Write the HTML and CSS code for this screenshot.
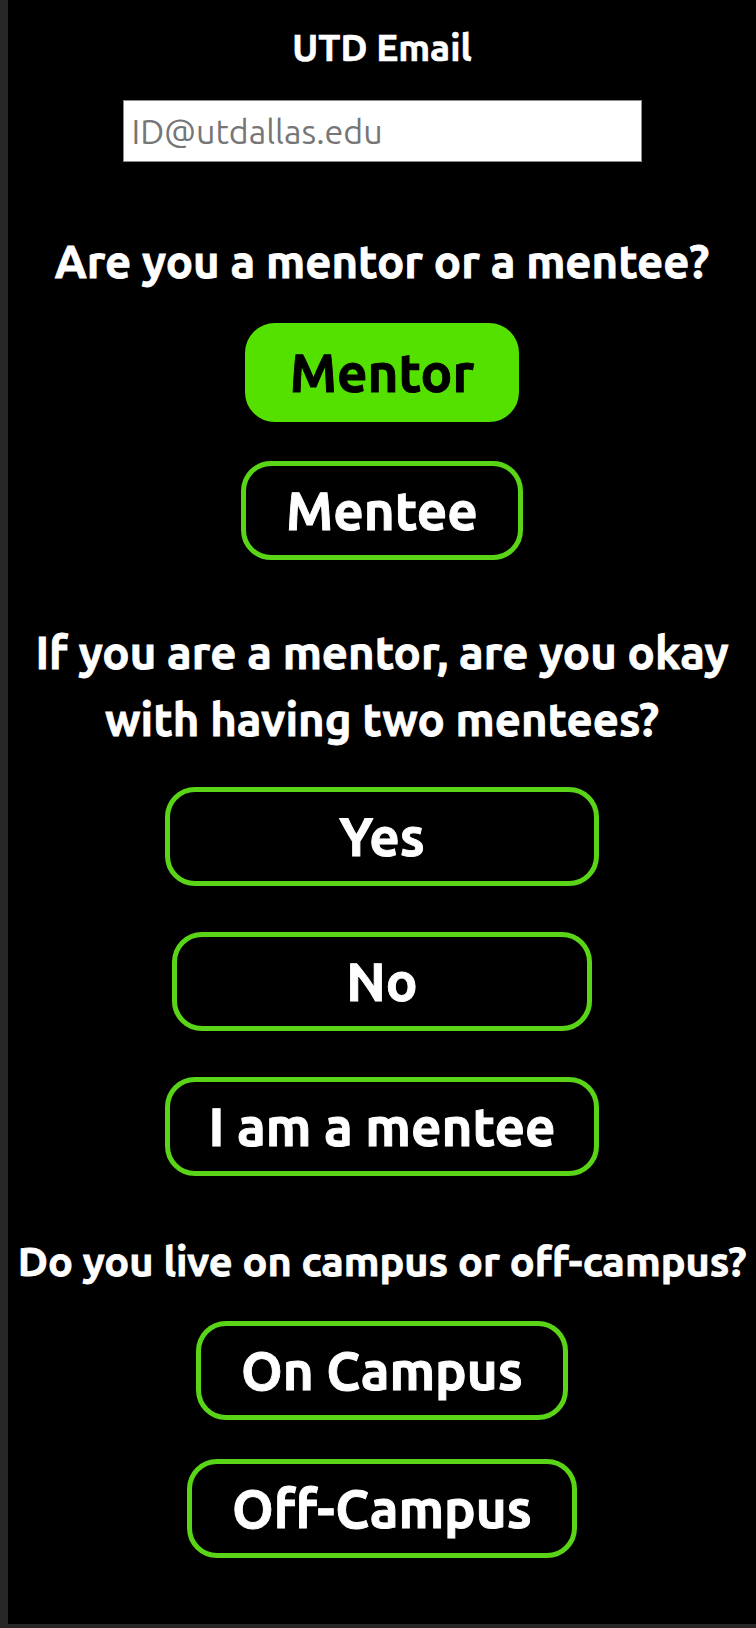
FILE: index.html
```html
<!DOCTYPE html>
<html lang="en">
<head>
<meta charset="utf-8">
<title>Mentorship Sign Up</title>
<link rel="stylesheet" href="styles.css">
</head>
<body>
<main class="page">
  <section class="field">
    <label class="field-label" for="email">UTD Email</label>
    <input class="email-input" id="email" type="email" placeholder="ID@utdallas.edu">
  </section>

  <section class="question q-role">
    <h2 class="question-title">Are you a mentor or a mentee?</h2>
    <div class="options options-tight">
      <button class="option option-selected" type="button">Mentor</button>
      <button class="option" type="button">Mentee</button>
    </div>
  </section>

  <section class="question q-two">
    <h2 class="question-title">If you are a mentor, are you okay with having two mentees?</h2>
    <div class="options options-loose">
      <button class="option option-yes" type="button">Yes</button>
      <button class="option option-no" type="button">No</button>
      <button class="option option-wide" type="button">I am a mentee</button>
    </div>
  </section>

  <section class="question q-campus">
    <h2 class="question-title question-small">Do you live on campus or off-campus?</h2>
    <div class="options options-tight">
      <button class="option" type="button">On Campus</button>
      <button class="option" type="button">Off-Campus</button>
    </div>
  </section>
</main>
</body>
</html>
```
FILE: styles.css
```css
html {
  background: #272727;
}

body {
  margin: 0;
  font-family: "Ubuntu", "Open Sans", "DejaVu Sans", sans-serif;
  color: #ffffff;
}

.page {
  margin: 0 0 4px 8px;
  height: 1624px;
  background: #000000;
  display: flex;
  flex-direction: column;
  align-items: center;
  box-sizing: border-box;
  padding-top: 26px;
}

.field {
  display: flex;
  flex-direction: column;
  align-items: center;
  gap: 30px;
}

.field-label {
  font-size: 37px;
  line-height: 44px;
  font-weight: 700;
  -webkit-text-stroke: 0.6px currentColor;
}

.email-input {
  width: 519px;
  height: 62px;
  box-sizing: border-box;
  margin: 0;
  padding: 0 8px;
  border: 1px solid #8a8a8a;
  border-radius: 0;
  background: #ffffff;
  font-family: inherit;
  font-size: 34px;
  color: #222;
  outline: none;
}

.email-input::placeholder {
  color: #767676;
}

.question {
  display: flex;
  flex-direction: column;
  align-items: center;
  width: 100%;
}

.q-role {
  margin-top: 66px;
}

.q-two {
  margin-top: 59px;
}

.q-campus {
  margin-top: 51px;
}

.question-title {
  margin: 0;
  font-size: 45.5px;
  line-height: 67px;
  font-weight: 700;
  text-align: center;
  -webkit-text-stroke: 0.8px currentColor;
}

.question-small {
  font-size: 41.5px;
  white-space: nowrap;
}

.q-role .question-title {
  margin-bottom: 28px;
}

.q-two .question-title {
  margin-bottom: 34px;
}

.q-campus .question-title {
  margin-bottom: 27px;
}

.options {
  display: flex;
  flex-direction: column;
  align-items: center;
}

.options-tight {
  gap: 39px;
}

.options-loose {
  gap: 46px;
}

.option {
  height: 99px;
  box-sizing: border-box;
  padding: 0 40px;
  border: 5px solid #5ad416;
  border-radius: 30px;
  background: #000000;
  color: #ffffff;
  font-family: inherit;
  font-size: 53px;
  font-weight: 700;
  line-height: 1;
  white-space: nowrap;
  display: flex;
  align-items: center;
  justify-content: center;
  cursor: pointer;
  -webkit-text-stroke: 0.9px currentColor;
}

.option-selected {
  background: #55e100;
  border-color: #55e100;
  color: #000000;
}

.option-yes,
.option-wide {
  width: 434px;
  padding: 0;
}

.option-no {
  width: 420px;
  padding: 0;
}
```
